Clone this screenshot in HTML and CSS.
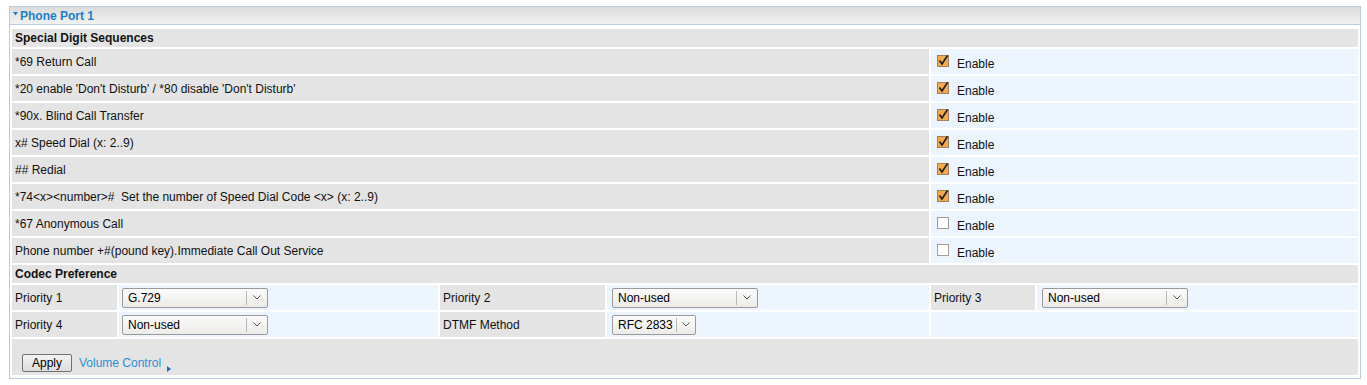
FILE: index.html
```html
<!DOCTYPE html>
<html lang="en">
  <head>
    <meta charset="UTF-8" />
    <title>Phone Port 1</title>
    <link rel="stylesheet" href="styles.css">
  </head>
  <body>
    <div class="panel">
      <div class="panel-title">
        <svg class="caret" width="5" height="4" viewBox="0 0 5 4"><path d="M0 0H5L2.5 3.5Z" fill="#1b7fcb"/></svg>
        Phone Port 1
      </div>
      <div class="sheet">
        <div class="section">Special Digit Sequences</div>

        <div class="label wide">*69 Return Call</div>
        <div class="value opt"><span class="cb on"><svg width="13" height="13" viewBox="0 0 13 13"><rect x="0.5" y="0.5" width="11" height="11" class="box"/><path d="M2.5 5.5L5 9L10.5 0.5" class="tick"/></svg></span><span class="opt-text">Enable</span></div>

        <div class="label wide">*20 enable 'Don't Disturb' / *80 disable 'Don't Disturb'</div>
        <div class="value opt"><span class="cb on"><svg width="13" height="13" viewBox="0 0 13 13"><rect x="0.5" y="0.5" width="11" height="11" class="box"/><path d="M2.5 5.5L5 9L10.5 0.5" class="tick"/></svg></span><span class="opt-text">Enable</span></div>

        <div class="label wide">*90x. Blind Call Transfer</div>
        <div class="value opt"><span class="cb on"><svg width="13" height="13" viewBox="0 0 13 13"><rect x="0.5" y="0.5" width="11" height="11" class="box"/><path d="M2.5 5.5L5 9L10.5 0.5" class="tick"/></svg></span><span class="opt-text">Enable</span></div>

        <div class="label wide">x# Speed Dial (x: 2..9)</div>
        <div class="value opt"><span class="cb on"><svg width="13" height="13" viewBox="0 0 13 13"><rect x="0.5" y="0.5" width="11" height="11" class="box"/><path d="M2.5 5.5L5 9L10.5 0.5" class="tick"/></svg></span><span class="opt-text">Enable</span></div>

        <div class="label wide">## Redial</div>
        <div class="value opt"><span class="cb on"><svg width="13" height="13" viewBox="0 0 13 13"><rect x="0.5" y="0.5" width="11" height="11" class="box"/><path d="M2.5 5.5L5 9L10.5 0.5" class="tick"/></svg></span><span class="opt-text">Enable</span></div>

        <div class="label wide">*74&lt;x&gt;&lt;number&gt;#&nbsp; Set the number of Speed Dial Code &lt;x&gt; (x: 2..9)</div>
        <div class="value opt"><span class="cb on"><svg width="13" height="13" viewBox="0 0 13 13"><rect x="0.5" y="0.5" width="11" height="11" class="box"/><path d="M2.5 5.5L5 9L10.5 0.5" class="tick"/></svg></span><span class="opt-text">Enable</span></div>

        <div class="label wide">*67 Anonymous Call</div>
        <div class="value opt"><span class="cb"><svg width="13" height="13" viewBox="0 0 13 13"><rect x="0.5" y="0.5" width="11" height="11" class="box"/></svg></span><span class="opt-text">Enable</span></div>

        <div class="label wide">Phone number +#(pound key).Immediate Call Out Service</div>
        <div class="value opt"><span class="cb"><svg width="13" height="13" viewBox="0 0 13 13"><rect x="0.5" y="0.5" width="11" height="11" class="box"/></svg></span><span class="opt-text">Enable</span></div>

        <div class="section">Codec Preference</div>

        <div class="label">Priority 1</div>
        <div class="value"><div class="select first"><span class="sel-text">G.729</span><span class="sel-arrow"><svg width="8" height="5" viewBox="0 0 8 5"><path d="M0.5 0.5L4 4L7.5 0.5" /></svg></span></div></div>
        <div class="label">Priority 2</div>
        <div class="value"><div class="select"><span class="sel-text">Non-used</span><span class="sel-arrow"><svg width="8" height="5" viewBox="0 0 8 5"><path d="M0.5 0.5L4 4L7.5 0.5" /></svg></span></div></div>
        <div class="label">Priority 3</div>
        <div class="value"><div class="select"><span class="sel-text">Non-used</span><span class="sel-arrow"><svg width="8" height="5" viewBox="0 0 8 5"><path d="M0.5 0.5L4 4L7.5 0.5" /></svg></span></div></div>

        <div class="label">Priority 4</div>
        <div class="value"><div class="select first"><span class="sel-text">Non-used</span><span class="sel-arrow"><svg width="8" height="5" viewBox="0 0 8 5"><path d="M0.5 0.5L4 4L7.5 0.5" /></svg></span></div></div>
        <div class="label">DTMF Method</div>
        <div class="value"><div class="select small"><span class="sel-text">RFC 2833</span><span class="sel-arrow"><svg width="8" height="5" viewBox="0 0 8 5"><path d="M0.5 0.5L4 4L7.5 0.5" /></svg></span></div></div>
        <div class="value span2"></div>

        <div class="footer">
          <button class="btn">Apply</button>
          <a class="more" href="#">Volume Control</a>
          <svg class="more-arrow" width="4" height="6" viewBox="0 0 4 6"><path d="M0 0L4 3L0 6Z" fill="#1a70b8"/></svg>
        </div>
      </div>
    </div>
  </body>
</html>
```

FILE: styles.css
```css
body {
  margin: 0;
  font-family: "Liberation Sans", Arial, sans-serif;
  font-size: 12px;
  color: #111;
  background: #fff;
}

.panel {
  margin: 6px 0 0 9px;
  width: 1350px;
  border: 1px solid #b7cfe6;
}

.panel-title {
  height: 17px;
  line-height: 16px;
  border-bottom: 1px solid #b7cfe6;
  background: linear-gradient(#dcdcdc, #f1f1f1);
  color: #1b7fcb;
  font-weight: bold;
  display: flex;
  align-items: center;
}

.caret {
  margin: 0 2px 3px 3px;
}

.sheet {
  display: grid;
  grid-template-columns: 105px 319px 165px 322px 104px 1fr;
  gap: 2px;
  padding: 4px 2px 3px 2px;
}

.section {
  grid-column: 1 / -1;
  height: 18px;
  background: #e4e4e4;
  font-weight: bold;
  padding-left: 3px;
  display: flex;
  align-items: center;
}

.label {
  height: 25px;
  background: #e4e4e4;
  padding-left: 3px;
  display: flex;
  align-items: center;
}

.label.wide {
  grid-column: 1 / 5;
}

.value {
  height: 25px;
  background: #ecf4fe;
  display: flex;
  align-items: center;
}

.value.opt {
  grid-column: 5 / 7;
  box-sizing: border-box;
  align-items: flex-start;
  padding: 6px 0 0 6px;
  line-height: 14px;
}

.value.span2 {
  grid-column: 5 / 7;
}

.cb {
  width: 13px;
  height: 13px;
  margin-right: 7px;
}

.cb svg {
  display: block;
}

.opt-text {
  margin-top: 2px;
}

.cb .box {
  fill: #fff;
  stroke: #a49c92;
}

.cb.on .box {
  fill: #f4a94a;
  stroke: #a08060;
}

.cb .tick {
  fill: none;
  stroke: #1d1d1d;
  stroke-width: 1.6;
}

.select {
  margin-left: 5px;
  width: 146px;
  height: 20px;
  box-sizing: border-box;
  border: 1px solid #9a9a9a;
  border-radius: 2px;
  background: linear-gradient(#fbfbfb, #ecebe8);
  display: flex;
  align-items: stretch;
}

.select.first {
  margin-left: 3px;
}

.select.small {
  width: 84px;
}

.sel-text {
  flex: 1;
  padding-left: 5px;
  display: flex;
  align-items: center;
  color: #000;
}

.sel-arrow {
  width: 20px;
  border-left: 1px solid #b9b9b9;
  margin: 2px 0;
  display: flex;
  align-items: center;
  justify-content: center;
}

.select.small .sel-arrow {
  width: 18px;
}

.sel-arrow path {
  fill: none;
  stroke: #555;
  stroke-width: 1;
}

.footer {
  grid-column: 1 / -1;
  height: 36px;
  background: #e4e4e4;
  display: flex;
  align-items: flex-start;
  padding: 15px 0 0 10px;
  box-sizing: border-box;
}

.btn {
  width: 50px;
  height: 18px;
  padding: 0;
  border: 1px solid #707070;
  border-radius: 2px;
  background: linear-gradient(#f4f4f4, #dcdcdc);
  font-family: "Liberation Sans", Arial, sans-serif;
  font-size: 12px;
  color: #000;
}

.more {
  margin: 2px 0 0 7px;
  color: #2a8fd4;
  text-decoration: none;
}

.more-arrow {
  margin: 12px 0 0 6px;
}
```
